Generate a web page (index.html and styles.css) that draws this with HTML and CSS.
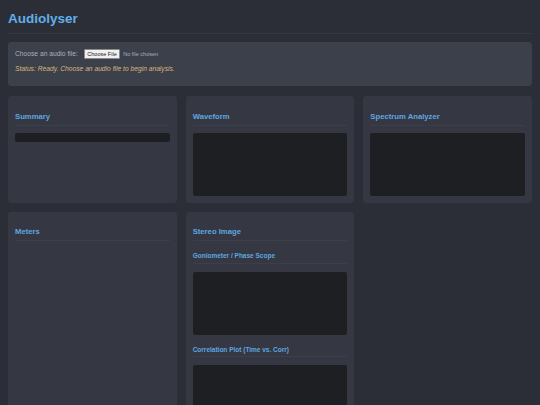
FILE: index.html
```html
<!DOCTYPE html>
<html lang="en">
<head>
    <meta charset="UTF-8">
    <meta name="viewport" content="width=device-width, initial-scale=1.0">
    <title>Audiolyser</title>
    <link rel="stylesheet" href="styles.css">
</head>
<body>
    <header class="app-header">
        <h1>Audiolyser</h1>
    </header>

    <!-- file selection -->
    <section class="controls">
        <div class="file-row">
            <label for="audioFile">Choose an audio file:</label>
            <input type="file" id="audioFile" accept="audio/*">
        </div>
        <p class="status" id="status">Status: Ready. Choose an audio file to begin analysis.</p>
    </section>

    <main class="grid">
        <div class="card">
            <h2>Summary</h2>
            <div class="summary-bar" id="summary"></div>
        </div>

        <div class="card">
            <h2>Waveform</h2>
            <canvas class="scope" id="waveform"></canvas>
        </div>

        <div class="card">
            <h2>Spectrum Analyzer</h2>
            <canvas class="scope" id="spectrum"></canvas>
        </div>

        <div class="card">
            <h2>Meters</h2>
            <div id="meters"></div>
        </div>

        <div class="card">
            <h2>Stereo Image</h2>
            <h3>Goniometer / Phase Scope</h3>
            <canvas class="scope" id="goniometer"></canvas>
            <h3>Correlation Plot (Time vs. Corr)</h3>
            <canvas class="scope" id="correlation"></canvas>
        </div>
    </main>
</body>
</html>
```

FILE: styles.css
```css
body {
    margin: 0;
    padding: 0 8px 8px;
    font-family: "Liberation Sans", Arial, sans-serif;
    background-color: #2b2e37;
    color: #a9afba;
}
.app-header {
    padding: 11px 0 6px;
    border-bottom: 1px solid #353842;
    margin-bottom: 8px;
}
h1 {
    margin: 0;
    font-size: 13.5px;
    line-height: 15.5px;
    color: #61aeea;
}
.controls {
    background-color: #3c404b;
    border-radius: 3px;
    padding: 7px 7px 7px;
    margin-bottom: 10px;
}
.file-row {
    display: flex;
    align-items: center;
    height: 10px;
    font-size: 6.7px;
}
.file-row label {
    margin-right: 6px;
}
input[type="file"] {
    font-family: "Liberation Sans", Arial, sans-serif;
    font-size: 5.5px;
    color: #a9afba;
}
input[type="file"]::file-selector-button {
    font-family: "Liberation Sans", Arial, sans-serif;
    font-size: 5.5px;
    font-weight: normal;
    padding: 1px 2.5px;
    margin-right: 3px;
    background-color: #f0f0f0;
    color: #222;
    border: 1px solid #8a8a8a;
    border-radius: 1px;
}
.status {
    margin: 6px 0 7px;
    font-size: 6.7px;
    line-height: 7.7px;
    font-style: italic;
    color: #d6b57c;
}
.grid {
    display: grid;
    grid-template-columns: repeat(3, 1fr);
    gap: 9px;
}
.card {
    background-color: #353842;
    border-radius: 3px;
    padding: 7px;
}
.card h2 {
    margin: 8.5px 0 7px;
    padding-bottom: 4px;
    font-size: 7.7px;
    line-height: 9px;
    color: #5fa6e0;
    border-bottom: 1px solid #3c3f4a;
}
.card h3 {
    margin: 11px 0 8px;
    padding-bottom: 3px;
    font-size: 6.5px;
    line-height: 7.5px;
    color: #5fa6e0;
    border-bottom: 1px solid #3c3f4a;
}
.summary-bar {
    height: 9px;
    background-color: #1e1f23;
    border-radius: 2px;
}
.scope {
    display: block;
    width: 100%;
    height: 63px;
    background-color: #1e1f23;
    border-radius: 2px;
}
```
